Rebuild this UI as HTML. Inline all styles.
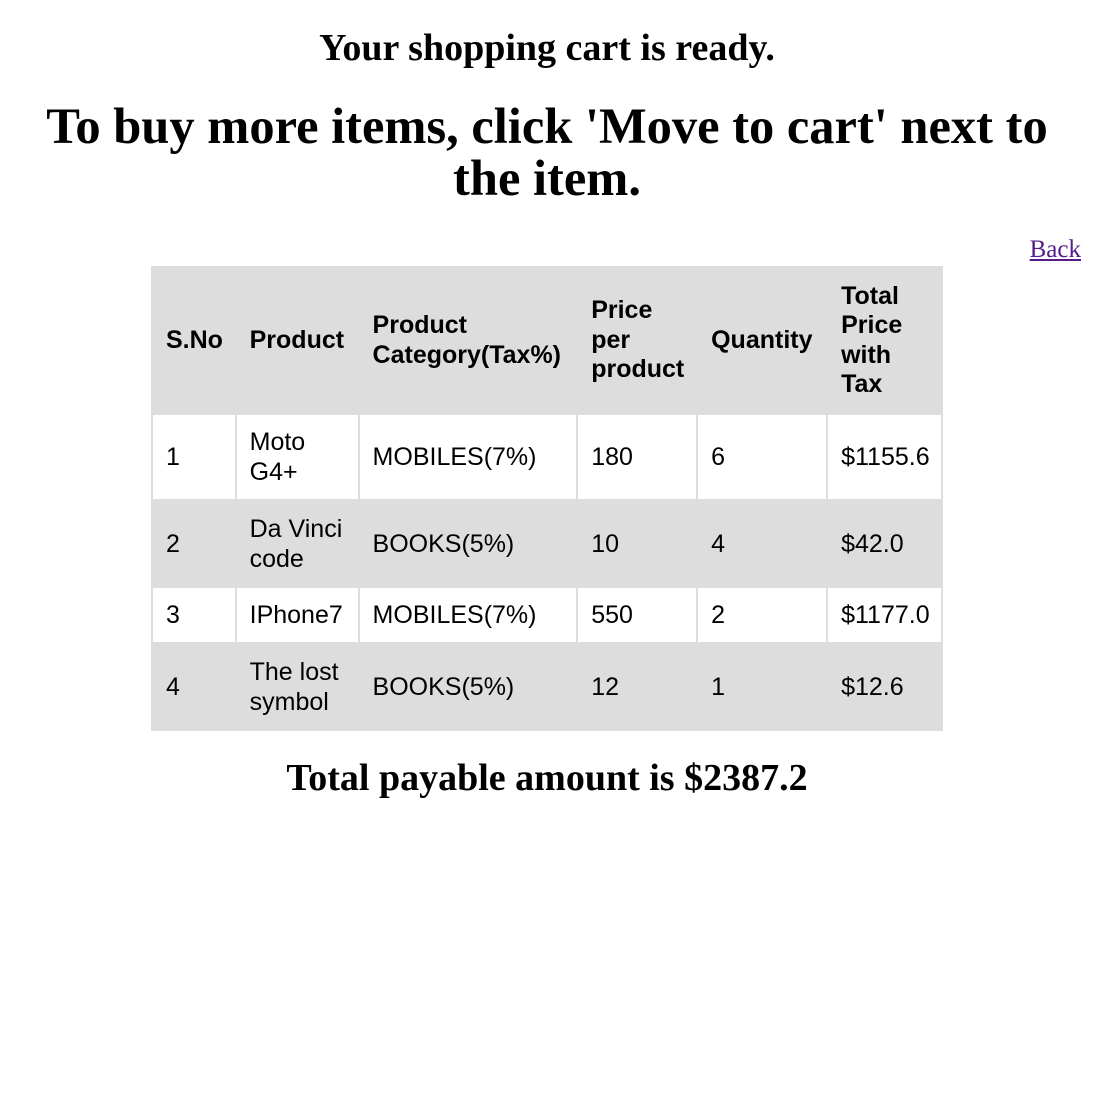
<!DOCTYPE html>
<html><head><meta charset="utf-8"><style>
body{margin:0;background:#fff;font-family:"Liberation Serif",serif;color:#000;width:1094px;height:1111px;position:relative;overflow:hidden}
.h3{position:absolute;left:0;width:1094px;text-align:center;font-weight:bold;font-size:38px;line-height:40px}
.h1{position:absolute;left:0;width:1094px;text-align:center;font-weight:bold;font-size:50.5px;line-height:52px}
a{position:absolute;right:13px;top:236px;font-size:25px;color:#551a8b;text-decoration:underline}
table{position:absolute;left:151px;top:266px;width:792px;border-collapse:separate;border-spacing:2px;background:#ddd;table-layout:fixed;font-family:"Liberation Sans",Arial,sans-serif;font-size:25px;line-height:30px}
td,th{padding:0 0 0 13px;text-align:left;vertical-align:middle;overflow:hidden;white-space:nowrap}
th{font-weight:bold;line-height:29.5px}
tr.w td{background:#fff}
</style></head><body>
<div class="h3" style="top:28px">Your shopping cart is ready.</div>
<div class="h1" style="top:100px">To buy more items, click 'Move to cart' next to<br>the item.</div>
<a>Back</a>
<table>
<colgroup><col style="width:81px"><col style="width:120px"><col style="width:215px"><col style="width:117px"><col style="width:127px"><col style="width:112px"></colgroup>
<tr style="height:145px"><th>S.No</th><th>Product</th><th>Product<br>Category(Tax%)</th><th>Price<br>per<br>product</th><th>Quantity</th><th>Total<br>Price<br>with<br>Tax</th></tr>
<tr class="w" style="height:84px"><td>1</td><td>Moto<br>G4+</td><td>MOBILES(7%)</td><td>180</td><td>6</td><td>$1155.6</td></tr>
<tr style="height:85px"><td>2</td><td>Da Vinci<br>code</td><td>BOOKS(5%)</td><td>10</td><td>4</td><td>$42.0</td></tr>
<tr class="w" style="height:54px"><td>3</td><td>IPhone7</td><td>MOBILES(7%)</td><td>550</td><td>2</td><td>$1177.0</td></tr>
<tr style="height:85px"><td>4</td><td>The lost<br>symbol</td><td>BOOKS(5%)</td><td>12</td><td>1</td><td>$12.6</td></tr>
</table>
<div class="h3" style="top:758px">Total payable amount is $2387.2</div>
</body></html>
